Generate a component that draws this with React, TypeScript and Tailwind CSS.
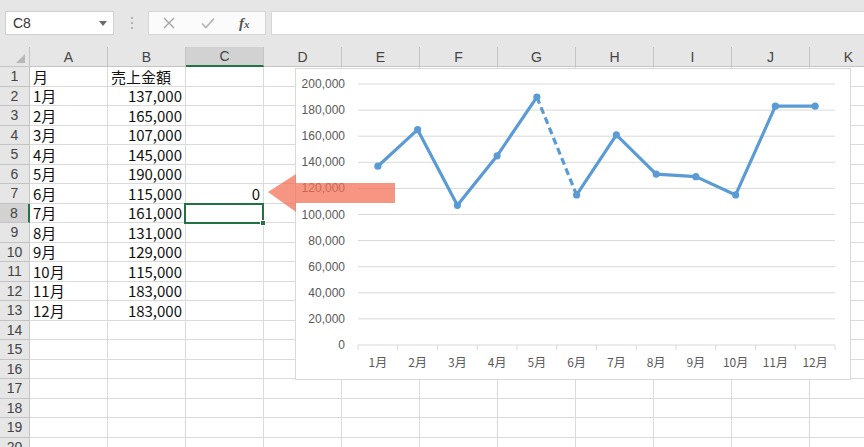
import React from "react";

const COLS = ["A", "B", "C", "D", "E", "F", "G", "H", "I", "J", "K"];
const SALES = [137000, 165000, 107000, 145000, 190000, 115000, 161000, 131000, 129000, 115000, 183000, 183000];
const ROW_COUNT = 20;

const cellFont = { fontFamily: '"Noto Sans CJK JP", "Noto Sans", sans-serif' };

function fmt(n: number) {
  return n.toLocaleString("en-US");
}

function cellText(row: number, col: string): { text: string; right: boolean } {
  if (row === 1) {
    if (col === "A") return { text: "月", right: false };
    if (col === "B") return { text: "売上金額", right: false };
  }
  if (row >= 2 && row <= 13) {
    const m = row - 1;
    if (col === "A") return { text: `${m}月`, right: false };
    if (col === "B") return { text: fmt(SALES[m - 1]), right: true };
  }
  if (row === 7 && col === "C") return { text: "0", right: true };
  return { text: "", right: false };
}

function FormulaBar() {
  return (
    <div className="flex h-[47px] items-start bg-[#e6e6e6] pt-[11px]">
      <div className="ml-[5px] flex h-[24px] w-[109px] items-center justify-between border border-[#d0d0d0] bg-white pl-[7px] pr-[6px]">
        <span className="text-[14px] text-[#333]" style={{ fontFamily: '"Liberation Sans", sans-serif' }}>
          C8
        </span>
        <svg width="8" height="5" viewBox="0 0 8 5">
          <polygon points="0,0 8,0 4,5" fill="#6b6b6b" />
        </svg>
      </div>
      <div className="ml-[16px] flex h-[24px] w-[4px] flex-col items-center justify-center gap-[3px]">
        <span className="h-[2px] w-[2px] rounded-full bg-[#a0a0a0]" />
        <span className="h-[2px] w-[2px] rounded-full bg-[#a0a0a0]" />
        <span className="h-[2px] w-[2px] rounded-full bg-[#a0a0a0]" />
      </div>
      <div className="ml-[14px] flex h-[24px] w-[118px] items-center border border-[#d6d6d6] bg-[#fbfbfb]">
        <svg className="ml-[14px]" width="12" height="12" viewBox="0 0 12 12">
          <path d="M1 1 L11 11 M11 1 L1 11" stroke="#a6a6a6" strokeWidth="1.4" fill="none" />
        </svg>
        <svg className="ml-[26px]" width="14" height="12" viewBox="0 0 14 12">
          <path d="M1 6.5 L5 10.5 L13 1.5" stroke="#b3b3b3" strokeWidth="1.6" fill="none" />
        </svg>
        <span
          className="ml-[24px] text-[15px] font-bold italic leading-none text-[#555]"
          style={{ fontFamily: '"Liberation Serif", serif' }}
        >
          f<span className="text-[11px]">x</span>
        </span>
      </div>
      <div className="ml-[5px] h-[24px] flex-1 border border-r-0 border-[#d6d6d6] bg-white" />
    </div>
  );
}

function HeaderRow() {
  return (
    <div className="flex h-[20px]">
      <div className="relative w-[30px] shrink-0 border-b border-r border-[#c4c4c4] bg-[#e6e6e6]">
        <svg className="absolute bottom-[3px] right-[4px]" width="9" height="9" viewBox="0 0 9 9">
          <polygon points="9,0 9,9 0,9" fill="#b8b8b8" />
        </svg>
      </div>
      {COLS.map((c) => {
        const sel = c === "C";
        return (
          <div
            key={c}
            className={
              sel
                ? "flex w-[78px] shrink-0 items-center justify-center border-r border-b-2 border-r-[#c4c4c4] border-b-[#217346] bg-[#d2d2d2] text-[14px] leading-none text-[#444]"
                : "flex w-[78px] shrink-0 items-center justify-center border-b border-r border-[#c4c4c4] bg-[#e6e6e6] text-[14px] leading-none text-[#444]"
            }
            style={{ fontFamily: '"Liberation Sans", sans-serif' }}
          >
            {c}
          </div>
        );
      })}
    </div>
  );
}

function SheetRow({ row }: { row: number }) {
  const selRow = row === 8;
  return (
    <div className="flex h-[19.5px]">
      <div
        className={
          selRow
            ? "flex w-[30px] shrink-0 items-center justify-center border-b border-r-2 border-b-[#c4c4c4] border-r-[#217346] bg-[#d2d2d2] text-[14px] leading-none text-[#444]"
            : "flex w-[30px] shrink-0 items-center justify-center border-b border-r border-[#c4c4c4] bg-[#e6e6e6] text-[14px] leading-none text-[#444]"
        }
        style={{ fontFamily: '"Liberation Sans", sans-serif' }}
      >
        {row}
      </div>
      {COLS.map((c) => {
        const { text, right } = cellText(row, c);
        const active = selRow && c === "C";
        return (
          <div
            key={c}
            className={
              right
                ? "relative flex w-[78px] shrink-0 items-center justify-end overflow-visible whitespace-nowrap border-b border-r border-[#dadada] bg-white pr-[3px] text-[15px] leading-none text-[#111]"
                : "relative flex w-[78px] shrink-0 items-center justify-start overflow-visible whitespace-nowrap border-b border-r border-[#dadada] bg-white pl-[3px] text-[15px] leading-none text-[#111]"
            }
            style={cellFont}
          >
            {text}
            {active && (
              <div className="absolute -left-[2px] -top-[1px] z-10 h-[21px] w-[80px] border-2 border-[#217346]">
                <div className="absolute -bottom-[4px] -right-[4px] h-[6px] w-[6px] border border-white bg-[#217346]" />
              </div>
            )}
          </div>
        );
      })}
    </div>
  );
}

function SalesChart() {
  const left = 63;
  const right = 540;
  const zeroY = 277;
  const step = 26.1;
  const cat = (right - left) / 12;
  const ticks = [0, 20000, 40000, 60000, 80000, 100000, 120000, 140000, 160000, 180000, 200000];
  const pts = SALES.map((v, i) => ({
    x: left + cat * (i + 0.5),
    y: zeroY - (v / 20000) * step,
  }));
  const solidA = pts.slice(0, 5).map((p) => `${p.x},${p.y}`).join(" ");
  const solidB = pts.slice(5).map((p) => `${p.x},${p.y}`).join(" ");
  return (
    <div className="absolute left-[295px] top-[68px] z-20 h-[312px] w-[556px] border border-[#d9d9d9] bg-white">
      <svg width="556" height="312" viewBox="0 0 556 312" className="absolute -left-[1px] -top-[1px]">
        {ticks.map((t) => {
          const y = zeroY - (t / 20000) * step;
          return (
            <g key={t}>
              <line x1={left} x2={right} y1={y} y2={y} stroke="#d9d9d9" strokeWidth="1" />
              <text
                x={50}
                y={y + 4}
                textAnchor="end"
                fontSize="12"
                fill="#595959"
                style={{ fontFamily: '"Liberation Sans", sans-serif' }}
              >
                {t === 0 ? "0" : fmt(t)}
              </text>
            </g>
          );
        })}
        {Array.from({ length: 13 }).map((_, i) => (
          <line
            key={i}
            x1={left + cat * i}
            x2={left + cat * i}
            y1={zeroY}
            y2={zeroY + 5}
            stroke="#d9d9d9"
            strokeWidth="1"
          />
        ))}
        {SALES.map((_, i) => (
          <text
            key={i}
            x={left + cat * (i + 0.5)}
            y={299}
            textAnchor="middle"
            fontSize="12"
            fill="#595959"
            style={{ fontFamily: '"Noto Sans CJK JP", sans-serif' }}
          >
            {`${i + 1}月`}
          </text>
        ))}
        <polyline points={solidA} fill="none" stroke="#5b9bd5" strokeWidth="3.2" strokeLinejoin="round" />
        <line
          x1={pts[4].x}
          y1={pts[4].y}
          x2={pts[5].x}
          y2={pts[5].y}
          stroke="#5b9bd5"
          strokeWidth="3.2"
          strokeDasharray="7 4"
        />
        <polyline points={solidB} fill="none" stroke="#5b9bd5" strokeWidth="3.2" strokeLinejoin="round" />
        {pts.map((p, i) => (
          <circle key={i} cx={p.x} cy={p.y} r="3.6" fill="#5b9bd5" />
        ))}
      </svg>
    </div>
  );
}

function PointerArrow() {
  return (
    <svg className="absolute left-[268px] top-[172px] z-30" width="128" height="42" viewBox="0 0 128 42">
      <polygon points="0,20 28,2 28,11 127,11 127,31 28,31 28,40" fill="#f26e52" fillOpacity="0.72" />
    </svg>
  );
}

export default function App() {
  return (
    <div className="relative h-[447px] w-[864px] overflow-hidden bg-white">
      <FormulaBar />
      <HeaderRow />
      <div className="flex flex-col">
        {Array.from({ length: ROW_COUNT }).map((_, i) => (
          <SheetRow key={i} row={i + 1} />
        ))}
      </div>
      <SalesChart />
      <PointerArrow />
    </div>
  );
}
